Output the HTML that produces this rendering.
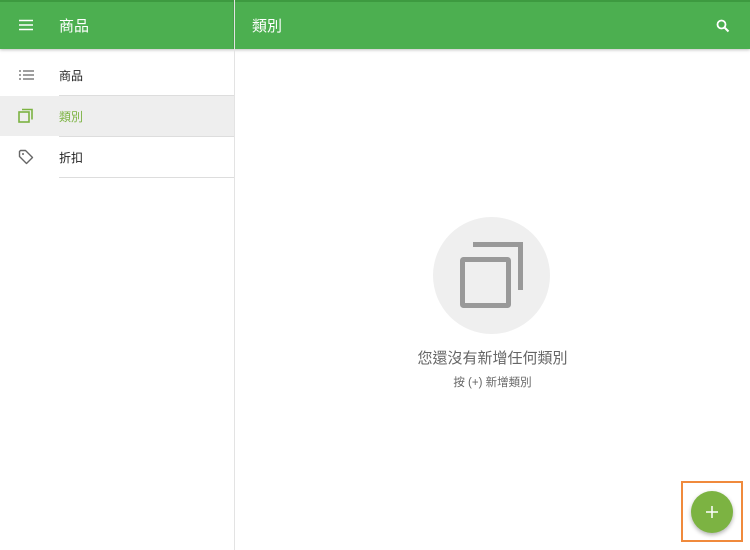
<!DOCTYPE html><html><head><meta charset="utf-8"><style>
*{margin:0;padding:0;box-sizing:border-box}
body{width:750px;height:550px;overflow:hidden;background:#fff;font-family:"Liberation Sans","Noto Sans CJK TC",sans-serif;position:relative}
.hdr{position:absolute;left:0;top:0;width:750px;height:49px;background:#4caf50;border-top:2px solid #3d9a40;box-shadow:0 1px 3px rgba(0,0,0,.25)}
.hdr .t{position:absolute;color:#fff;font-size:15px;top:13px}
.vl{position:absolute;left:234px;top:0;width:1px;height:550px;background:#e3e3e3}
.row{position:absolute;left:0;width:234px;height:41px}
.row span{position:absolute;left:59px;top:12px;font-size:12px;color:#222}
.div{position:absolute;left:59px;width:175px;height:1px;background:#ddd}
</style></head><body>
<div class="hdr">
<svg style="position:absolute;left:19px;top:17px" width="14" height="12"><path d="M0 1.5H14M0 6H14M0 10.5H14" stroke="#fff" stroke-width="1.6"/></svg>
<div class="t" style="left:59px">商品</div>
<div style="position:absolute;left:233px;top:0;width:1px;height:47px;background:rgba(0,0,0,.08)"></div>
<div class="t" style="left:252px">類別</div>
<svg style="position:absolute;left:716px;top:17px" width="14" height="14"><circle cx="5.5" cy="5.5" r="4" fill="none" stroke="#fff" stroke-width="1.8"/><path d="M8.5 8.5L12.5 12.5" stroke="#fff" stroke-width="2"/></svg>
</div>
<div class="vl"></div>
<div class="row" style="top:55px"><svg style="position:absolute;left:19px;top:15px" width="15" height="10"><path d="M0 1H2M4 1H15M0 5H2M4 5H15M0 9H2M4 9H15" stroke="#666" stroke-width="1.2"/></svg><span>商品</span></div>
<div class="div" style="top:95px"></div>
<div class="row" style="top:96px;background:#eee;height:40px"><svg style="position:absolute;left:18px;top:12px" width="16" height="16"><rect x="1" y="4" width="10" height="10" fill="none" stroke="#7cb342" stroke-width="1.6"/><path d="M4 1.5H14V11.5" fill="none" stroke="#7cb342" stroke-width="1.6"/></svg><span style="color:#7cb342">類別</span></div>
<div class="div" style="top:136px"></div>
<div class="row" style="top:137px"><svg style="position:absolute;left:18px;top:12px" width="16" height="16"><path d="M1.5 2.5V7.5L8.5 14.5L14.5 8.5L7.5 1.5H2.5Z" fill="none" stroke="#666" stroke-width="1.4" stroke-linejoin="round"/><circle cx="5" cy="5" r="1" fill="#666"/></svg><span>折扣</span></div>
<div class="div" style="top:177px"></div>
<div style="position:absolute;left:433px;top:217px;width:117px;height:117px;border-radius:50%;background:#efefef"></div>
<svg style="position:absolute;left:455px;top:238px" width="75" height="75"><rect x="7.5" y="21.5" width="46" height="46" rx="1" fill="none" stroke="#999" stroke-width="5"/><path d="M18 6.5H65.5V52" fill="none" stroke="#999" stroke-width="5"/></svg>
<div style="position:absolute;left:235px;width:515px;top:347px;text-align:center;font-size:15px;color:#666">您還沒有新增任何類別</div>
<div style="position:absolute;left:235px;width:515px;top:374px;text-align:center;font-size:11.5px;color:#666">按 (+) 新增類別</div>
<div style="position:absolute;left:681px;top:481px;width:62px;height:61px;border:2px solid #f08a3c"></div>
<div style="position:absolute;left:691px;top:491px;width:42px;height:42px;border-radius:50%;background:#7cb342;box-shadow:0 2px 4px rgba(0,0,0,.3)"></div>
<svg style="position:absolute;left:706px;top:506px" width="12" height="12"><path d="M6 0V12M0 6H12" stroke="#fff" stroke-width="1.5"/></svg>
</body></html>
